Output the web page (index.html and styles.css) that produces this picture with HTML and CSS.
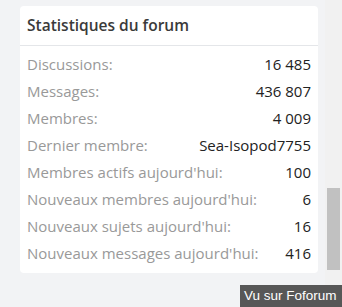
FILE: index.html
```html
<!DOCTYPE html>
<html lang="fr">
<head>
<meta charset="utf-8">
<link rel="stylesheet" href="styles.css">
</head>
<body>
<div class="page">
  <main class="main">
    <section class="card">
      <h2 class="card-title">Statistiques du forum</h2>
      <dl class="stats">
        <div class="row"><dt>Discussions:</dt><dd>16 485</dd></div>
        <div class="row"><dt>Messages:</dt><dd>436 807</dd></div>
        <div class="row"><dt>Membres:</dt><dd>4 009</dd></div>
        <div class="row"><dt>Dernier membre:</dt><dd>Sea-Isopod7755</dd></div>
        <div class="row"><dt>Membres actifs aujourd'hui:</dt><dd>100</dd></div>
        <div class="row"><dt>Nouveaux membres aujourd'hui:</dt><dd>6</dd></div>
        <div class="row"><dt>Nouveaux sujets aujourd'hui:</dt><dd>16</dd></div>
        <div class="row"><dt>Nouveaux messages aujourd'hui:</dt><dd>416</dd></div>
      </dl>
    </section>
  </main>
  <div class="scrollbar"><div class="thumb"></div></div>
</div>
<div class="tooltip">Vu sur Foforum</div>
</body>
</html>
```
FILE: styles.css
```css
html, body {
  margin: 0;
  padding: 0;
  width: 342px;
  height: 307px;
  overflow: hidden;
  background: #f2f3f5;
  font-family: "Open Sans", "Noto Sans", sans-serif;
}
.page {
  display: flex;
  height: 307px;
}
.main {
  flex: 1;
  padding: 6px 7px 0 20px;
}
.card {
  background: #fff;
  border-radius: 4px;
  width: 298px;
  box-sizing: border-box;
}
.card-title {
  margin: 0;
  padding: 0 7px;
  height: 39px;
  line-height: 39px;
  font-size: 15.5px;
  font-weight: 600;
  color: #3a3a3a;
  border-bottom: 1px solid #e4e6e9;
}
.stats {
  margin: 0;
  padding: 5px 7px 6px 7px;
}
.row {
  display: flex;
  justify-content: space-between;
  height: 27px;
  line-height: 27px;
  font-size: 15px;
}
.row dt {
  color: #999;
}
.row dd {
  margin: 0;
  color: #222;
}
.scrollbar {
  width: 17px;
  background: #f1f1f1;
  display: flex;
  flex-direction: column;
  justify-content: flex-start;
  padding-top: 188px;
  box-sizing: border-box;
}
.thumb {
  margin-left: 2px;
  width: 13px;
  height: 82px;
  background: #c1c1c1;
}
.tooltip {
  position: absolute;
  right: 0;
  bottom: 0;
  width: 102px;
  height: 22px;
  box-sizing: border-box;
  background: #575757;
  color: #fff;
  font-family: "Liberation Sans", Arial, sans-serif;
  font-size: 13.5px;
  line-height: 22px;
  padding-left: 4px;
}
```
